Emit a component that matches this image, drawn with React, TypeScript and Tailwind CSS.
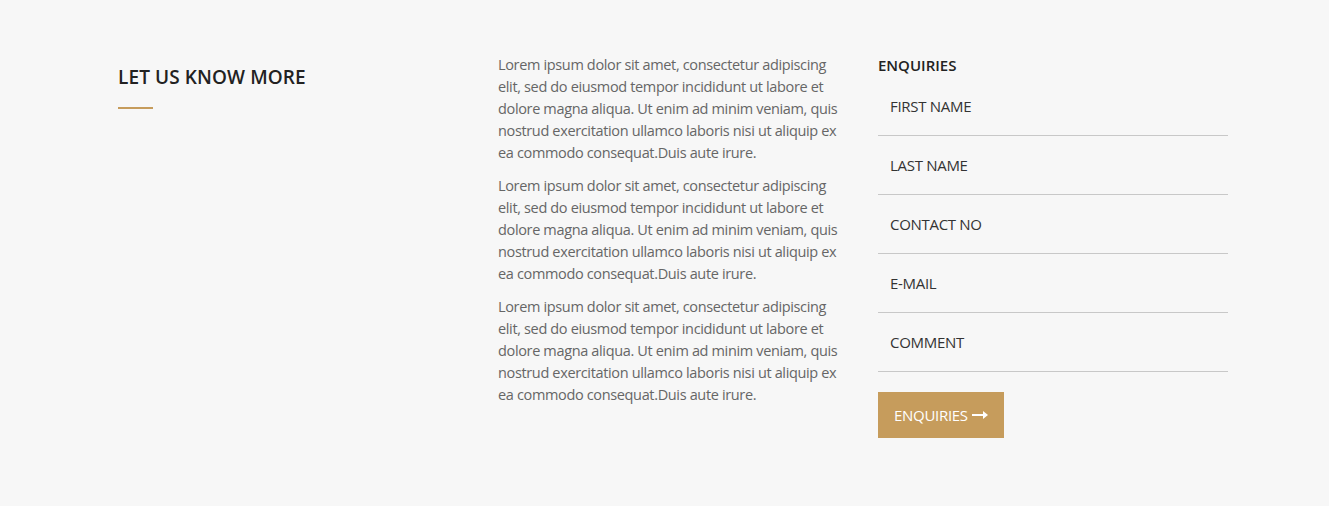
import React from 'react';

const LOREM =
  'Lorem ipsum dolor sit amet, consectetur adipiscing elit, sed do eiusmod tempor incididunt ut labore et dolore magna aliqua. Ut enim ad minim veniam, quis nostrud exercitation ullamco laboris nisi ut aliquip ex ea commodo consequat.Duis aute irure.';

const FIELDS = ['FIRST NAME', 'LAST NAME', 'CONTACT NO', 'E-MAIL', 'COMMENT'];

export default function App() {
  return (
    <div className="min-h-[506px] bg-[#f7f7f7] font-['Open_Sans',sans-serif]">
      <div className="ml-[118px] w-[1110px] pt-[54px] pb-[68px] grid grid-cols-3 gap-[30px]">
        {/* Heading */}
        <div className="pt-[12px]">
          <h2 className="text-[19px] leading-[22px] font-semibold text-[#222] tracking-[0.1px]">
            LET US KNOW MORE
          </h2>
          <div className="mt-[19px] w-[35px] h-[2px] bg-[#c69c5c]" />
        </div>

        {/* Copy */}
        <div className="flex flex-col gap-[11px] text-[14.5px] leading-[22px] text-[#666] tracking-[-0.35px]">
          <p>{LOREM}</p>
          <p>{LOREM}</p>
          <p>{LOREM}</p>
        </div>

        {/* Form */}
        <div>
          <h3 className="text-[15px] leading-[23px] font-semibold text-[#222]">ENQUIRIES</h3>
          <div className="flex flex-col">
            {FIELDS.map(f => (
              <input
                key={f}
                placeholder={f}
                className="h-[59px] py-0 px-[12px] bg-transparent border-b border-[#c8c8c8] text-[15px] text-[#333] placeholder:text-[#333] outline-none tracking-[-0.3px]"
              />
            ))}
          </div>
          <button className="mt-[20px] h-[46px] px-[16px] bg-[#c69c5c] text-white text-[15px] tracking-[-0.3px] flex items-center gap-[4px]">
            ENQUIRIES
            <svg width="16" height="10" viewBox="0 0 16 10" fill="white">
              <path d="M0 4h11V1l5 4-5 4V6H0z" />
            </svg>
          </button>
        </div>
      </div>
    </div>
  );
}
